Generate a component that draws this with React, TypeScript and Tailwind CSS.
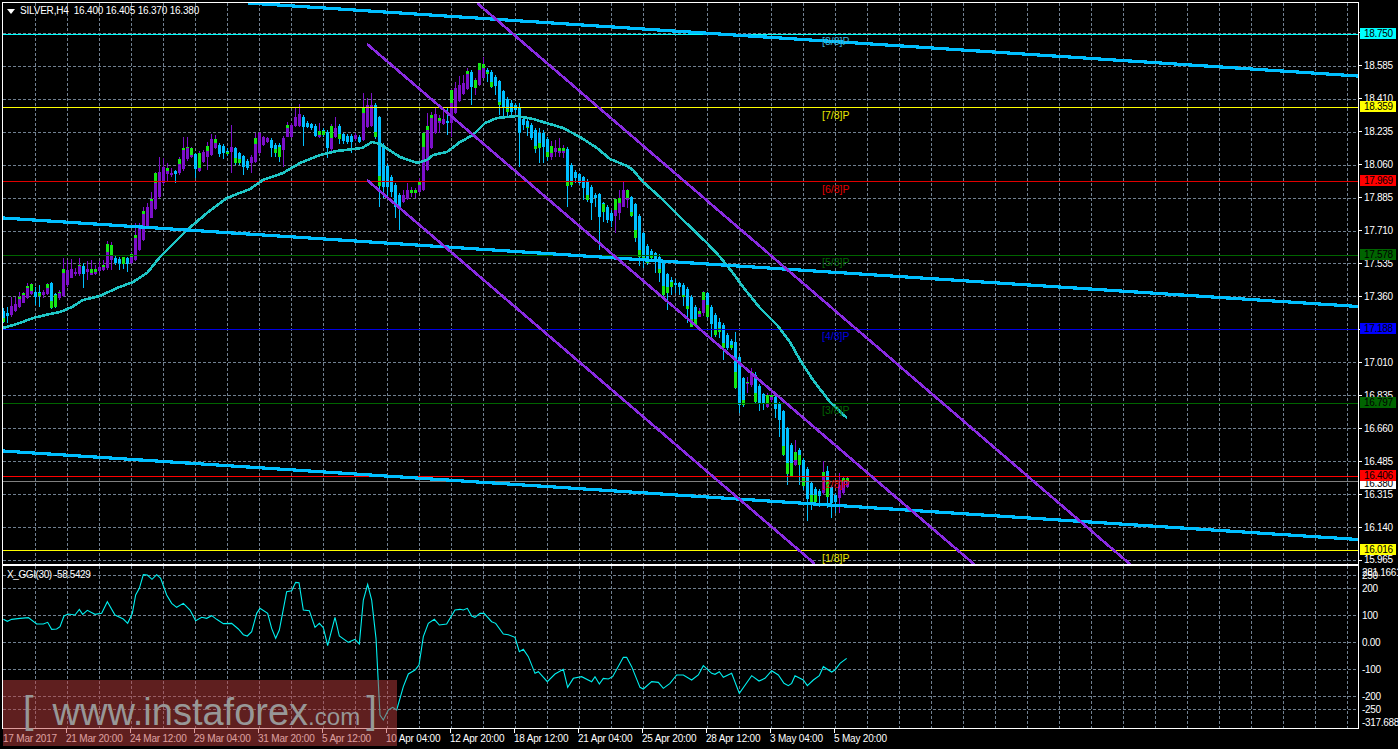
import React from 'react';

// candle rows: [kind (1 up, 0 down), bodyTop, bodyBottom, high, low, greenLen]
// values were read from 3x crops, so y = base + value / 3
type Row = number[];

const seg1: Row[] = [
  [0,362,397,355,398,12],[0,370,378,352,398,0],[1,348,375,320,380,0],[1,342,362,320,365,0],[1,322,352,305,355,5],
  [1,310,338,305,340,5],[1,287,325,280,328,6],[1,283,312,280,315,20],[0,307,320,292,345,0],[0,306,318,285,350,8],
  [1,306,316,300,325,0],[1,283,312,280,315,10],[0,280,355,277,358,22],[0,312,350,308,355,35],[1,305,325,300,330,4],
  [1,238,318,205,320,12],[1,240,285,210,290,0],[1,237,263,208,265,0],[1,245,252,235,258,0],[1,226,253,205,258,3],
  [0,228,252,220,293,0],[1,237,245,212,270,0],[1,238,254,210,256,10],[1,238,252,225,255,8],[1,232,244,212,248,0],
  [1,225,240,210,242,5],[1,162,233,154,240,25],[1,165,210,155,240,33],[0,205,220,195,225,0],[0,208,222,200,240,0],
  [0,202,222,200,238,20],[0,205,222,200,245,0],[1,192,218,185,222,10],[1,136,210,100,212,9],[1,110,180,100,182,0],
  [1,64,150,50,152,8],[1,52,110,40,112,0],[1,28,83,5,85,6],
];

const seg2: Row[] = [
  [1,520,628,515,630,28],[1,515,590,472,595,0],[1,500,550,475,555,0],[1,503,522,490,545,10],[1,518,525,505,530,0],
  [0,513,522,510,548,0],[1,478,520,470,525,15],[1,445,508,412,512,5],[1,440,478,412,482,5],[1,445,470,440,475,20],
  [0,462,508,458,535,0],[1,458,512,452,515,45],[1,455,485,450,490,0],[1,437,470,425,510,15],[1,418,465,403,468,0],
  [1,418,443,405,447,12],[0,435,462,430,470,0],[0,437,460,432,478,0],[0,453,462,445,468,5],[1,442,457,375,520,0],
  [0,445,490,440,495,15],[0,460,490,455,495,12],[0,468,500,465,525,0],[0,482,503,478,510,0],[1,470,490,465,520,0],
  [1,415,485,400,488,18],[1,400,460,395,462,0],[1,412,435,408,438,0],[1,415,425,410,428,0],[0,420,445,415,470,0],
  [0,435,458,430,470,12],[0,435,470,430,485,30],[1,415,450,408,500,0],[1,375,410,365,412,10],[1,375,410,368,415,0],
  [1,350,378,325,382,0],[1,342,378,312,382,0],[0,350,382,345,438,0],[0,368,380,362,385,0],[0,372,385,368,390,0],
  [0,378,408,372,412,0],[1,392,410,370,415,14],[0,390,405,385,410,12],[0,395,445,390,475,0],[1,378,448,372,452,35],
  [1,385,410,350,414,0],[0,378,418,372,432,15],[0,403,422,398,432,0],[0,408,425,402,432,0],[0,408,425,402,458,0],
  [1,405,418,398,422,0],[0,412,425,405,430,0],[1,320,420,278,424,20],[1,315,380,295,384,0],[1,315,378,280,382,0],
  [0,315,412,310,416,15],[0,352,558,348,622,30],[0,435,560,430,595,0],[0,497,562,492,590,0],[0,530,575,525,590,0],
  [0,555,620,550,655,0],[0,585,625,580,690,0],[1,585,605,570,610,0],[1,570,597,550,600,0],[1,570,580,560,590,8],
  [1,570,580,565,595,8],[1,545,575,535,580,10],
];

const seg3: Row[] = [
  [1,250,420,248,422,40],[1,228,360,190,362,12],[1,195,295,185,298,10],[1,192,250,170,252,0],[1,205,220,195,250,8],
  [1,207,222,180,225,0],[0,212,220,175,255,0],[1,120,218,118,260,40],[1,115,190,95,192,0],[1,105,153,78,155,0],
  [1,98,132,75,135,0],[1,62,118,55,120,10],[0,65,112,60,165,0],[1,90,115,85,135,25],[1,40,105,38,108,20],
  [1,42,83,22,85,13],[0,60,72,55,95,6],[0,67,110,60,115,15],[0,80,107,75,135,0],[0,93,165,90,195,8],
  [0,123,172,120,200,0],[0,147,185,142,200,8],[0,158,185,150,205,0],[0,165,180,158,190,0],[0,173,250,160,350,0],
  [0,208,225,200,240,0],[0,212,235,205,258,4],[0,225,263,218,270,0],[0,240,297,235,310,10],[0,250,293,235,340,15],
  [0,248,292,240,340,0],[0,268,320,262,332,15],[1,288,320,272,330,22],[1,295,305,270,320,0],[1,295,308,265,322,8],
  [1,295,308,285,325,8],[0,298,407,292,472,10],[0,345,405,340,410,12],[0,365,385,360,400,0],[0,372,400,368,405,0],
  [0,382,415,378,450,0],[0,392,450,388,455,15],[0,412,458,405,510,0],[0,435,445,430,470,0],[0,432,500,428,600,0],
  [0,460,487,455,515,25],[0,470,510,465,520,0],[0,488,512,480,530,0],[1,448,498,445,550,32],[1,445,490,420,510,15],
  [1,420,470,395,472,0],[1,420,450,418,475,23],[0,442,497,438,500,12],
];

const seg4: Row[] = [
  [0,72,175,68,185,25],[0,108,230,102,258,20],[0,160,240,155,265,8],[0,197,250,192,255,10],[0,213,235,208,240,8],
  [0,218,245,215,278,0],[0,230,278,222,305,12],[0,250,345,245,348,27],[0,282,340,278,390,18],[0,300,322,290,345,15],
  [0,308,315,298,340,0],[0,310,322,305,345,0],[0,315,350,308,378,5],[0,327,387,320,430,9],[0,350,440,345,442,22],
  [0,380,435,375,438,17],[1,393,410,385,412,8],[1,335,400,332,408,25],[0,340,410,335,415,35],[0,380,432,375,475,0],
  [0,405,465,400,470,15],[0,425,455,415,475,10],[0,435,505,430,540,15],[0,465,505,460,510,0],[0,483,505,478,510,10],
];

const seg5: Row[] = [
  [0,37,175,5,178,50],[0,80,225,75,248,0],[0,145,225,140,230,15],[1,155,163,140,190,4],[1,125,165,115,170,8],
  [0,135,215,125,220,25],[0,168,218,162,243,0],[0,192,220,188,240,0],[1,195,232,190,235,25],[1,195,210,185,215,5],
  [0,200,237,195,265,0],[0,220,270,215,320,0],[0,243,375,240,378,27],[0,295,432,290,465,32],[0,345,437,340,440,37],
  [1,365,405,330,408,25],[0,360,405,355,465,30],[0,390,468,385,480,23],[0,417,508,412,572,0],[0,458,515,452,540,20],
  [0,478,515,470,518,20],[0,483,498,478,530,0],[1,425,490,393,495,15],[0,423,500,408,535,50],[0,470,520,465,565,0],
  [0,495,515,490,550,0],[1,465,503,430,548,0],[1,445,490,440,495,10],[1,445,472,442,475,10],
];

const toPx = (rows: Row[], base: number) =>
  rows.map(r => [r[0], base + r[1] / 3, base + r[2] / 3, base + r[3] / 3, base + r[4] / 3, r[5] / 3]);

const candles = [...toPx(seg1, 190), ...toPx(seg2, 0), ...toPx(seg3, 50), ...toPx(seg4, 180), ...toPx(seg5, 330)];

const maPts = [
  [3,328],[20,323],[33,318],[50,314],[60,312],[72,307],[83,300],[100,296],[117,288],[133,282],[147,273],[160,257],
  [167,250],[187,230],[207,213],[227,198],[250,189],[263,180],[283,173],[300,163],[320,155],[337,151],[362,148],
  [372,142],[380,144],[400,157],[417,163],[427,160],[433,155],[447,152],[460,142],[473,135],[485,123],[497,118],
  [517,116],[533,119],[553,125],[563,128],[580,137],[597,148],[610,159],[627,166],[633,170],[643,182],[660,197],
  [683,220],[707,243],[720,257],[733,273],[743,287],[760,308],[777,325],[790,342],[800,360],[813,380],[830,402],[847,418],
];

const ggiA = [
  10,178,22,184,35,178,60,175,85,173,110,192,130,192,143,187,155,208,170,207,180,200,192,168,205,162,225,165,238,148,
  248,163,262,151,285,163,305,160,322,125,345,165,370,177,383,190,397,160,407,105,418,85,430,44,442,45,456,58,470,44,
  482,55,500,105,515,130,530,142,550,130,570,150,587,182,605,172,620,175,635,167,650,178,670,191,695,190,715,207,730,224,
  742,228,755,215,770,160,780,145,803,160,815,205,827,235,838,210,860,95,875,92,887,67,897,68,910,150,928,152,945,202,
  958,190,970,203,983,257,1005,172,1018,228,1045,247,1065,238,1078,252,1090,120,1103,73,1115,120,1128,235,1135,370,
  1140,465,1150,480,1165,450,1178,442,1190,450,1210,380,1225,342,1245,330,1257,315,1270,230,1285,190,1303,178,1318,195,
  1340,192,1365,150,1380,148,
];
const ggiB = [
  10,150,22,145,35,168,45,172,60,160,72,160,95,185,107,190,130,222,145,224,165,232,178,275,190,268,205,290,225,340,235,335,
  262,365,285,342,310,328,323,382,340,355,365,350,395,365,405,350,418,372,430,355,445,357,458,350,490,292,500,292,515,320,
  540,382,550,387,575,365,595,367,610,385,630,370,650,345,670,345,695,360,715,345,730,317,755,340,765,343,778,335,790,352,
  815,340,838,400,875,347,897,363,915,355,935,332,955,345,972,370,985,377,995,370,1005,347,1030,360,1042,377,1060,360,
  1078,347,1090,320,1115,336,1125,330,1140,310,1160,295,
];

const ggiPoints = () => {
  const out: string[] = [];
  for (let i = 0; i < ggiA.length; i += 2) out.push(`${ggiA[i] / 3},${560 + ggiA[i + 1] / 3}`);
  for (let i = 0; i < ggiB.length; i += 2) out.push(`${460 + ggiB[i] / 3},${560 + ggiB[i + 1] / 3}`);
  return out.join(' ');
};

const vGrid = Array.from({ length: 42 }, (_, i) => 35 + i * 32);
const priceGrid = Array.from({ length: 17 }, (_, i) => Math.round(32.7 + i * 32.97));
const indGrid = [575, 588, 615, 642, 669, 696, 709];

const murrey = [
  { y: 34, color: '#00ffff', text: '[8/8]P', textColor: 'text-[#3fb4d8]' },
  { y: 107, color: '#ffff00', text: '[7/8]P', textColor: 'text-[#e8e800]' },
  { y: 181, color: '#e00000', text: '[6/8]P', textColor: 'text-[#e00000]' },
  { y: 255, color: '#006400', text: '[5/8]P', textColor: 'text-[#006400]' },
  { y: 329, color: '#0000e0', text: '[4/8]P', textColor: 'text-[#0000e0]' },
  { y: 403, color: '#006400', text: '[3/8]P', textColor: 'text-[#006400]' },
  { y: 476, color: '#ff0000', text: '[2/8]P', textColor: 'text-[#e00000]' },
  { y: 550, color: '#ffff00', text: '[1/8]P', textColor: 'text-[#e8e800]' },
];

// empty rows sit under the coloured tags
const priceLabels = [
  '', '18.585', '18.410', '18.235', '18.060', '17.885', '17.710', '17.535', '17.360', '',
  '17.010', '16.835', '16.660', '16.485', '16.315', '16.140', '15.965',
];

const priceTags = [
  ['18.750', 28, 'bg-[#00ffff]'], ['18.359', 101, 'bg-[#ffff00]'], ['17.969', 175, 'bg-[#ff0000]'],
  ['17.578', 249, 'bg-[#006400]'], ['17.188', 323, 'bg-[#0000ff]'], ['16.797', 397, 'bg-[#006400]'],
  ['16.380', 478, 'bg-white'], ['16.406', 470, 'bg-[#ff0000]'], ['16.016', 544, 'bg-[#ffff00]'],
] as [string, number, string][];

const indLabels = [
  ['281.1661', 572.5], ['250', 575.5], ['200', 588.5], ['100', 615.5], ['0.00', 642.5], ['-100', 669.5],
  ['-200', 696.5], ['-250', 709.5], ['-317.688', 722.5],
] as [string, number][];

const timeLabels = [
  '21 Mar 20:00', '24 Mar 12:00', '29 Mar 04:00', '31 Mar 20:00', '5 Apr 12:00', '10 Apr 04:00', '12 Apr 20:00',
  '18 Apr 12:00', '21 Apr 04:00', '25 Apr 20:00', '28 Apr 12:00', '3 May 04:00', '5 May 20:00',
];

function GridLines({ rows, top, bottom }: { rows: number[]; top: number; bottom: number }) {
  return (
    <g stroke="#708090" strokeDasharray="3 2" shapeRendering="crispEdges">
      {vGrid.map(x => <line key={x} x1={x + 0.5} x2={x + 0.5} y1={top} y2={bottom} />)}
      {rows.map(y => <line key={y} x1={3} x2={1358} y1={y + 0.5} y2={y + 0.5} />)}
    </g>
  );
}

function Candles() {
  return (
    <g shapeRendering="crispEdges">
      {candles.map((c, i) => {
        const x = 3 + i * 4;
        const [kind, top, bot, hi, lo, g] = c;
        const fill = kind ? '#7c0fc9' : '#00bfff';
        return (
          <g key={i}>
            <rect x={x} y={hi} width={1} height={lo - hi} fill={fill} />
            <rect x={x - 1} y={top} width={3} height={bot - top} fill={fill} />
            {g > 0 && <rect x={x - 1} y={kind ? top : bot - g} width={3} height={g} fill="#14e614" />}
          </g>
        );
      })}
    </g>
  );
}

function PriceChart() {
  return (
    <svg className="block w-[1355px] h-[561px]" viewBox="3 3 1355 561">
      <GridLines rows={priceGrid} top={3} bottom={564} />
      <Candles />
      <g shapeRendering="crispEdges" strokeWidth={1}>
        {murrey.map(m => <line key={m.text} x1={3} x2={1358} y1={m.y + 0.5} y2={m.y + 0.5} stroke={m.color} />)}
        <line x1={3} x2={1358} y1={481.5} y2={481.5} stroke="#808080" />
      </g>
      <polyline points={maPts.map(p => p.join(',')).join(' ')} fill="none" stroke="#1fc6c6" strokeWidth={2.6} shapeRendering="crispEdges" />
      <g stroke="#00bfff" strokeWidth={3.2} shapeRendering="crispEdges">
        <line x1={248} y1={3} x2={1358} y2={76} />
        <line x1={3} y1={218} x2={1358} y2={306.5} />
        <line x1={3} y1={451} x2={1358} y2={539.5} />
      </g>
      <g stroke="#8a2be2" strokeWidth={2.6} shapeRendering="crispEdges">
        <line x1={367} y1={44} x2={975} y2={565} />
        <line x1={367} y1={180} x2={815} y2={564} />
        <line x1={477} y1={3} x2={1131} y2={565} />
      </g>
    </svg>
  );
}

function IndicatorChart() {
  return (
    <svg className="block w-[1355px] h-[162px]" viewBox="3 566 1355 162">
      <GridLines rows={indGrid} top={566} bottom={728} />
      <polyline points={ggiPoints()} fill="none" stroke="#00f0f0" strokeWidth={1.1} />
    </svg>
  );
}

export default function App() {
  return (
    <div className="relative w-[1398px] h-[749px] overflow-hidden bg-black pt-[2px] pl-[2px] font-['Liberation_Sans',Arial,sans-serif] text-[10px] leading-3 text-white">
      <div className="flex h-[563px]">
        <div className="relative w-[1357px] shrink-0 overflow-hidden border border-white">
          <PriceChart />
          <div className="absolute left-[4px] top-[2px] flex items-center gap-[5px] whitespace-pre tracking-[-0.2px]">
            <span className="h-0 w-0 border-x-[4px] border-t-[5px] border-x-transparent border-t-white" />
            <span>SILVER,H4  16.400 16.405 16.370 16.380</span>
          </div>
          <div className="absolute left-[819px] top-[32px] flex flex-col gap-[61.8px] text-[10.5px]">
            {murrey.map(m => <div key={m.text} className={m.textColor}>{m.text}</div>)}
          </div>
        </div>
        <div className="relative flex-1 overflow-hidden">
          <div className="flex flex-col pt-[14.5px]">
            {priceLabels.map((text, i) => (
              <div key={i} className="flex h-[32.97px] shrink-0 items-center gap-[2px] tracking-[-0.3px]">
                <span className="h-px w-[3px] bg-white" />
                <span>{text}</span>
              </div>
            ))}
          </div>
          {priceTags.map(([text, y, bg]) => (
            <div
              key={text}
              className={`absolute left-[1px] h-[11px] w-[36px] pl-[4px] leading-[11px] tracking-[-0.3px] text-black ${bg}`}
              style={{ top: y - 2 }}
            >
              {text}
            </div>
          ))}
        </div>
      </div>

      <div className="flex h-[164px]">
        <div className="relative w-[1357px] shrink-0 overflow-hidden border border-white">
          <IndicatorChart />
          <div className="absolute left-[4px] top-[3px] tracking-[-0.4px]">X_GGI(30) -58.5429</div>
        </div>
        <div className="relative flex-1 overflow-hidden">
          {indLabels.map(([text, y]) => (
            <div key={text} className="absolute left-[3px] whitespace-nowrap tracking-[-0.3px]" style={{ top: y - 571 }}>{text}</div>
          ))}
        </div>
      </div>

      <div className="flex h-[20px]">
        <div className="w-[64px] shrink-0 pt-[4px] pl-px tracking-[-0.2px]">17 Mar 2017</div>
        {timeLabels.map(text => (
          <div key={text} className="flex w-[64px] shrink-0 flex-col">
            <div className="h-[4px] w-px bg-white" />
            <div className="whitespace-nowrap tracking-[-0.2px]">{text}</div>
          </div>
        ))}
      </div>

      <div className="absolute left-[3px] top-[680px] flex h-[66px] w-[394px] items-end whitespace-pre bg-[#be3e3e]/50 pb-[15px] pl-[20px] text-[#979797]">
        <span className="mb-[2px] text-[38px] leading-[38px]">[</span>
        <span className="ml-[19px] text-[38px] leading-[38px]">www.instaforex</span>
        <span className="text-[24px] leading-[28px]">.com</span>
        <span className="ml-[6px] mb-[2px] text-[38px] leading-[38px]">]</span>
      </div>
    </div>
  );
}
